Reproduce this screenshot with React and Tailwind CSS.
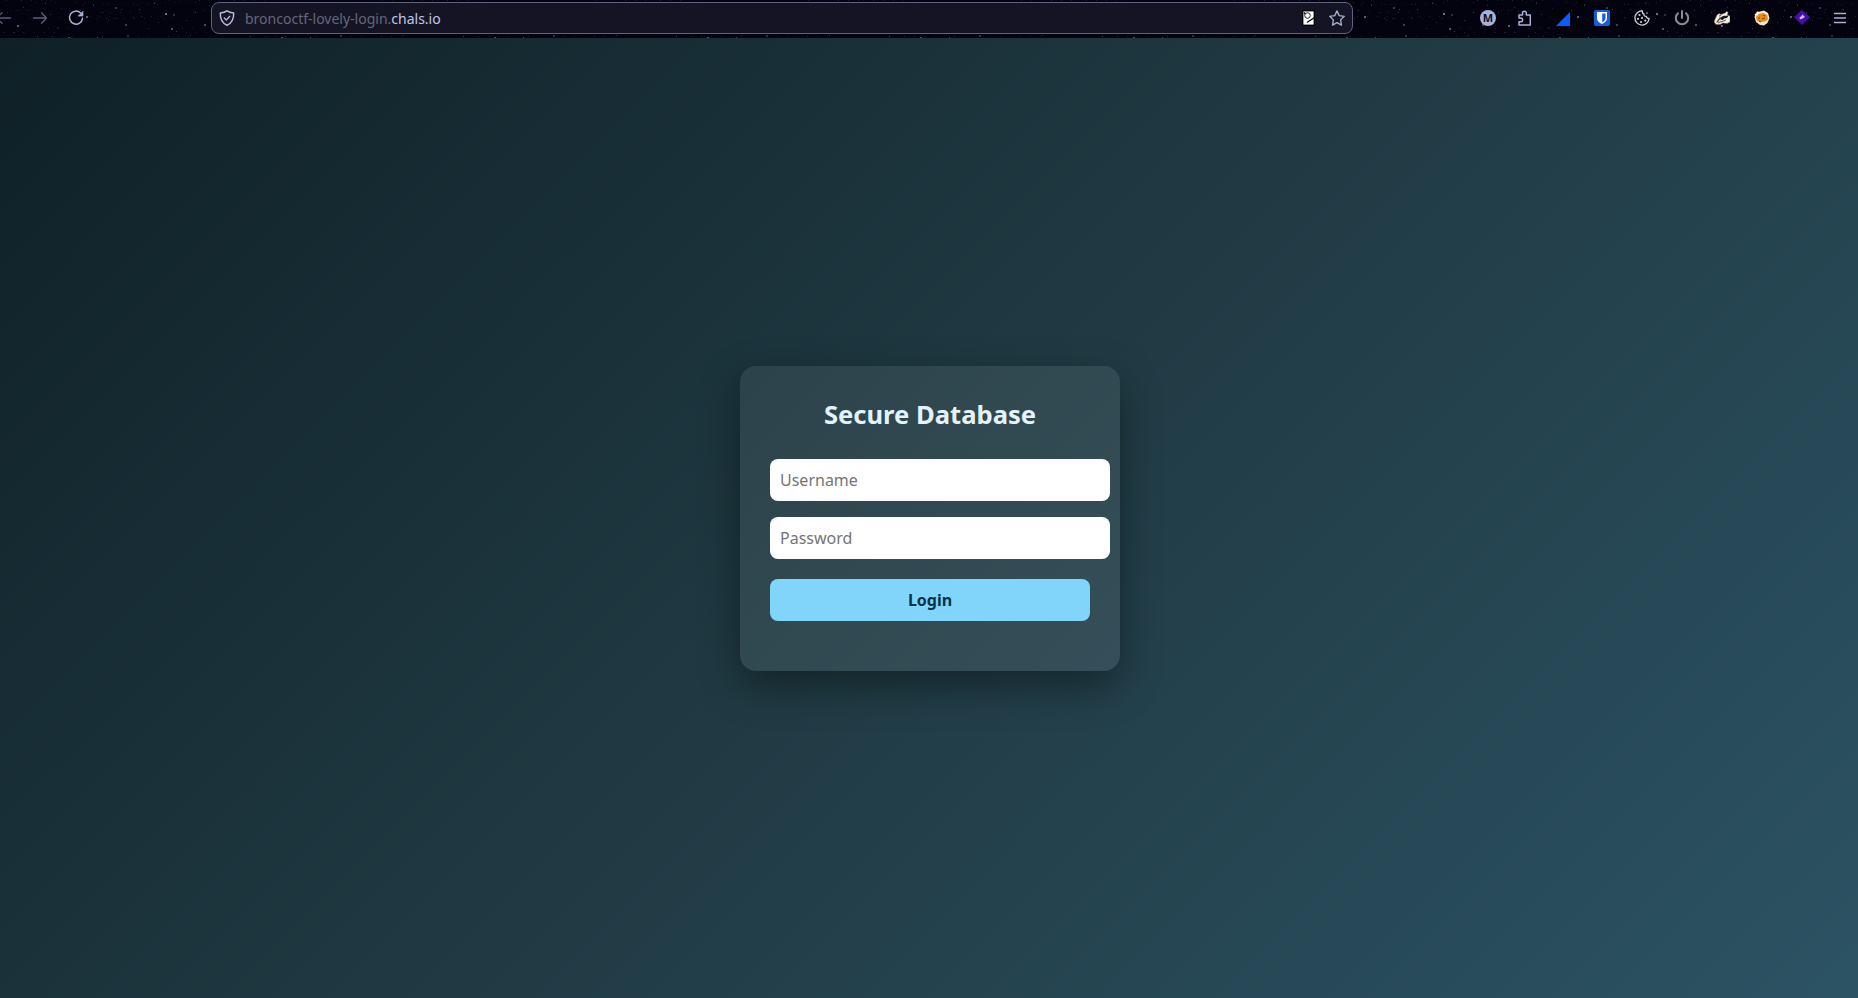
import React, { useState } from 'react';

// one tile of the star theme : [x, y, size, opacity]
const stars = [
    [17, 25, 2, 0.6], [23, 7, 1, 0.3], [37, 36, 1, 0.4], [57, 27, 1, 0.3], [68, 37, 2, 0.5],
    [80, 10, 1, 0.4], [86, 16, 2, 0.6], [93, 5, 1, 0.4], [97, 37, 1, 0.5], [108, 20, 1, 0.3],
    [115, 7, 2, 0.35], [121, 9, 1, 0.4], [125, 24, 2, 0.4], [127, 35, 2, 0.3], [139, 9, 1, 0.4],
    [148, 28, 1, 0.3], [154, 3, 1, 0.4], [165, 13, 2, 0.7], [171, 28, 2, 0.5], [173, 14, 2, 0.3],
    [176, 31, 1, 0.4], [186, 20, 1, 0.3], [195, 12, 1, 0.4], [204, 24, 2, 0.5], [209, 5, 1, 0.3],
    [45, 3, 1, 0.3], [50, 14, 1, 0.3], [73, 22, 1, 0.3], [102, 12, 1, 0.3], [158, 22, 1, 0.3],
    [7, 12, 1, 0.3], [30, 18, 1, 0.2], [133, 17, 1, 0.3], [190, 35, 1, 0.3], [61, 8, 1, 0.2],
];

// faint dust between the stars
const dust = Array.from({ length: 110 }, (_, i) => [(i * 79 + 11) % 213, (i * i * 7 + i * 5) % 38, 1, 0.08 + (i % 5) * 0.04]);

const Stars = () => (
    <svg className="absolute inset-0 w-full h-full" shapeRendering="crispEdges">
        <defs>
            <pattern id="stars" width="213" height="38" patternUnits="userSpaceOnUse">
                {[...dust, ...stars].map(([x, y, s, o], i) => (
                    <rect key={i} x={x} y={y} width={s} height={s} fill="#8f93c9" opacity={o} />
                ))}
            </pattern>
        </defs>
        <rect width="100%" height="100%" fill="url(#stars)" />
    </svg>
);

const Icon = ({ children, className = "" }) => (
    <svg
        viewBox="0 0 16 16"
        className={"w-4 h-4 shrink-0 overflow-visible " + className}
        fill="none"
        stroke="currentColor"
        strokeWidth="1.3"
        strokeLinecap="round"
        strokeLinejoin="round"
    >
        {children}
    </svg>
);

const Toolbar = () => {
    return (
        <header className="relative flex items-center h-[38px] bg-[#02030f] text-[#a9b1d6]">
            <Stars />
            <nav className="relative flex items-center w-[211px] h-full pb-0.5">
                <Icon className="-ml-[5px] text-[#5c6078]">
                    <path d="M15.5 8H1.5M7 2.8 1.5 8 7 13.2" />
                </Icon>
                <Icon className="ml-[21px] text-[#5c6078]">
                    <path d="M1.5 8h13M9.5 2.8l5 5.2-5 5.2" />
                </Icon>
                <Icon className="ml-5">
                    <path d="M12.6 3A6.5 6.5 0 1 0 14.5 8.3" strokeWidth="1.5" />
                    <path d="M15 1.5v4.6h-4.6z" fill="currentColor" strokeWidth="0.6" />
                </Icon>
            </nav>
            <div className="relative flex items-center w-[1142px] h-8 -mt-0.5 pl-[7px] pr-[7px] rounded-[8px] border border-[#5f6280] bg-[#141425]">
                <Icon className="text-[#b4bbe0]">
                    <path d="M8 .8c2 1.4 4.3 1.9 6.7 2.1C14.9 8.5 13.2 13 8 15.3 2.8 13 1.1 8.5 1.3 2.9 3.7 2.7 6 2.2 8 .8z" strokeWidth="1.5" />
                    <path d="m5.3 8 2 2 3.5-3.8" />
                </Icon>
                <span className="ml-2.5 pt-0.5 flex-1 text-[14px] leading-5 whitespace-nowrap text-[#65677c]">
                    broncoctf-lovely-login.<span className="text-[#c0c7ea]">chals.io</span>
                </span>
                <svg viewBox="0 0 13 16" className="w-[13px] h-4 shrink-0">
                    <rect x=".7" y=".7" width="11.6" height="14.6" fill="#fff" stroke="#050505" strokeWidth="1.4" />
                    <circle cx="5.5" cy="5.5" r="2.8" fill="#fff" stroke="#111" strokeWidth=".9" />
                    <path d="M2 2.5 3.3 4M5 12.500l7.500-5" stroke="#111" strokeWidth="1.5" fill="none" />
                </svg>
                <Icon className="ml-[14px]">
                    <path d="m8 .9 2.2 4.7 5.1.7-3.7 3.6.9 5.2L8 12.6l-4.5 2.5.9-5.2L.7 6.3l5.1-.7z" />
                </Icon>
            </div>
            <div className="relative flex flex-1 items-center justify-end gap-6 pr-[10px] pb-0.5">
                <span className="flex items-center justify-center w-4 h-4 pb-px rounded-full bg-[#a9b1d6] text-[#10111f] text-[11px] font-bold leading-none">
                    M
                </span>
                <Icon className="-ml-[3px] -mr-[3px]">
                    <path d="M2 5h3.5V3.2a1.9 1.9 0 0 1 3.8 0V5h4v10H2v-3.3h1.800a1.800 1.800 0 0 0 0-3.600H2z" strokeWidth="1.5" />
                </Icon>
                <svg viewBox="0 0 16 16" className="w-4 h-4 shrink-0">
                    <path d="M0 0h16L0 16z" fill="#030305" />
                    <path d="M16 2v14H2z" fill="#0b5cff" />
                </svg>
                <svg viewBox="0 0 16 16" className="w-4 h-4 shrink-0">
                    <rect width="16" height="16" rx="2" fill="#175ddc" />
                    <path d="M3 2h10v6.500c0 2.500-2.500 4.500-5 5.500-2.500-1-5-3-5-5.500z" fill="#fff" />
                    <path d="M8.200 3.500h3.300v5c0 1.500-1.500 2.800-3.300 3.800z" fill="#175ddc" />
                </svg>
                <Icon className="text-[#d0d0d4]">
                    <path d="M8.500.9a7.100 7.100 0 1 0 6.600 7.500c-1.500.2-2.600-.5-2.700-2-1.700.2-2.700-.8-2.400-2.400C8.700 3.700 8 2.400 8.500.9z" />
                    <g fill="currentColor" stroke="none">
                        <circle cx="5.500" cy="5" r="1.100" />
                        <circle cx="4" cy="8.800" r="1.100" />
                        <circle cx="8" cy="8" r="1.100" />
                        <circle cx="7" cy="12" r="1.100" />
                        <circle cx="11.300" cy="10.600" r="1.100" />
                        <circle cx="13" cy="3" r=".8" />
                    </g>
                </Icon>
                <Icon className="text-[#8b8b90]">
                    <path d="M4 3.300a6.200 6.200 0 1 0 8 0M8 1v7" strokeWidth="2" />
                </Icon>
                <svg viewBox="0 0 16 16" className="w-4 h-4 shrink-0">
                    <path d="M0 12 1.500 8 3 5l2-1.500L7 4.500 11 3l1.500-1.500L14 2l-.5 3L16 6v6l-3 1.500-4-.5-3 1.500H2z" fill="#f3eee4" stroke="#8a5a35" strokeWidth=".5" />
                    <path d="m6 8 3-2 5.500-.5-1.500 2.500-3 .5-1 1.500-2.500-.5z" fill="#19191c" />
                    <path d="M2 12.500 6 7l1 1-3.500 4.500z" fill="#45413f" />
                    <path d="m5 6 2-.5M7 12l5-2M4 13l3-1.500" stroke="#4a4542" strokeWidth=".9" />
                </svg>
                <svg viewBox="0 0 16 16" className="w-4 h-4 shrink-0">
                    <path d="m2 2.500 4-1L10 .5 14 3l1.500 5-2 5L10 15.500l-4-.5L2 12 .5 7z" fill="#f0e6cf" />
                    <path d="m5 4 4-1 4 2 1 4-2 2-4 1-5-1-1-4z" fill="#e98a12" />
                    <path d="M4 8h2M9 5l2 1M8 9l3-1M5 11l2 1" stroke="#7a3e08" />
                    <path d="m1 5 3-1M3 2l2 1" stroke="#fff" strokeWidth="1.500" />
                </svg>
                <svg viewBox="0 0 16 16" className="w-4 h-4 shrink-0 overflow-visible">
                    <path d="m8-.3 8 7.600-8 7.600L0 7.300z" fill="#4310a8" />
                    <path d="m8.500 4.500 1.500 1.500 1 1L8.500 8.500 6 9.500 5.500 7.500l1.500-1z" fill="#dcb8ff" />
                </svg>
                <Icon className="ml-[-2px]">
                    <path d="M2.500 3.500h11M2.500 8h11M2.500 12.500h11" />
                </Icon>
            </div>
        </header>
    );
};

const inputClass = "block w-[340px] h-[42px] px-2.5 rounded-[8px] bg-white text-base text-black placeholder:text-[#757575] outline-none";

const App = () => {
    const [user, setUser] = useState({ username: "", password: "" });

    const changeHandler = (e) => {
        setUser({ ...user, [e.target.name]: e.target.value });
    };

    return (
        <div className="flex flex-col h-screen overflow-hidden font-['Noto_Sans',sans-serif]">
            <Toolbar />
            <main className="flex flex-1 items-center justify-center pl-[2px] bg-[linear-gradient(135deg,#0f2027,#203a43,#2c5364)]">
                <form
                    onSubmit={(e) => e.preventDefault()}
                    className="w-[380px] h-[305px] px-[30px] pt-[31px] rounded-[16px] bg-white/8 shadow-[0_15px_40px_rgba(0,0,0,0.4)]"
                >
                    <h2 className="text-center text-[25.6px] leading-[36px] font-bold text-[#e3f2fd]">Secure Database</h2>
                    <input
                        type="text"
                        name="username"
                        placeholder="Username"
                        value={user.username}
                        onChange={changeHandler}
                        className={inputClass + " mt-[26px]"}
                    />
                    <input
                        type="password"
                        name="password"
                        placeholder="Password"
                        value={user.password}
                        onChange={changeHandler}
                        className={inputClass + " mt-4"}
                    />
                    <button
                        type="submit"
                        className="block w-full h-[42px] mt-5 rounded-[8px] bg-[#81d4fa] text-base font-bold text-[#01344a]"
                    >
                        Login
                    </button>
                </form>
            </main>
        </div>
    );
};

export default App;
